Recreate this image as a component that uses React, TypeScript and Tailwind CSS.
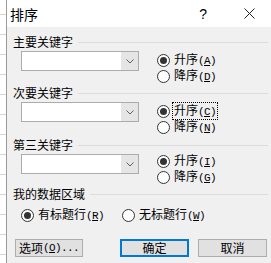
import React from "react";

const gridRows = Array.from({ length: 13 });

function Key({ k }: { k: string }) {
  return (
    <span className="font-['Liberation_Mono',monospace] text-[11px] tracking-[-0.6px]">
      (<u>{k}</u>)
    </span>
  );
}

function Radio({
  checked,
  label,
  k,
  focus,
}: {
  checked?: boolean;
  label: string;
  k: string;
  focus?: boolean;
}) {
  return (
    <div className="flex items-center h-[16px]">
      <span className="w-[13px] h-[13px] rounded-full border border-[#333333] bg-white flex items-center justify-center shrink-0">
        {checked && <span className="w-[7px] h-[7px] rounded-full bg-[#333333]" />}
      </span>
      <span
        className={`ml-[2px] px-[1px] leading-[14px] border ${
          focus ? "border-dotted border-black" : "border-transparent"
        }`}
      >
        {label}
        <Key k={k} />
      </span>
    </div>
  );
}

function Combo() {
  return (
    <div className="w-[118px] h-[20px] border border-[#acacac] bg-white flex justify-end shrink-0">
      <div className="w-[17px] h-full bg-[#e5e5e5] flex items-center justify-center">
        <svg width="8" height="5" viewBox="0 0 8 5">
          <path d="M0.5 0.5 L4 4 L7.5 0.5" stroke="#606060" fill="none" />
        </svg>
      </div>
    </div>
  );
}

function GroupLabel({ text }: { text: string }) {
  return (
    <div className="flex items-center h-[16px]">
      <span className="leading-[16px]">{text}</span>
      <div className="flex-1 h-px bg-[#dcdcdc] ml-[5px]" />
    </div>
  );
}

function KeySection({
  title,
  up,
  down,
  focus,
  contentH,
  radioTop,
}: {
  title: string;
  up: string;
  down: string;
  focus?: boolean;
  contentH: string;
  radioTop: string;
}) {
  return (
    <div>
      <GroupLabel text={title} />
      <div className={`flex items-start pl-[8px] ${contentH}`}>
        <div className="mt-[1px]">
          <Combo />
        </div>
        <div className={`ml-[18px] ${radioTop}`}>
          <Radio checked label="升序" k={up} focus={focus} />
          <Radio label="降序" k={down} />
        </div>
      </div>
    </div>
  );
}

export default function App() {
  return (
    <div className="flex w-[271px] h-[263px] overflow-hidden font-['Noto_Sans_CJK_SC',sans-serif] text-[12px] text-black">
      {/* sheet behind the dialog */}
      <div className="w-[6px] shrink-0 bg-white flex flex-col">
        <div className="h-[15px] border-b border-[#d4d4d4] shrink-0" />
        {gridRows.map((_, i) => (
          <div key={i} className="h-[20px] border-b border-[#d4d4d4] shrink-0" />
        ))}
      </div>

      <div className="flex-1 flex flex-col border-l border-[#9a9a9a] min-w-0">
        {/* title bar */}
        <div className="h-[27px] bg-white flex items-center pl-[3px] shrink-0">
          <span className="text-[14px] leading-[16px]">排序</span>
          <div className="flex-1" />
          <span className="font-['Liberation_Sans',sans-serif] text-[14px] leading-[16px]">?</span>
          <div className="w-[37px]" />
          <svg width="11" height="11" viewBox="0 0 11 11" className="mr-[16px]">
            <path d="M0.5 0.5 L10.5 10.5 M10.5 0.5 L0.5 10.5" stroke="#222" strokeWidth="1" />
          </svg>
        </div>

        {/* body */}
        <div className="flex-1 bg-[#f0f0f0] pt-[7px] pl-[6px] pr-[3px]">
          <KeySection title="主要关键字" up="A" down="D" contentH="h-[35px]" radioTop="mt-[2px]" />
          <KeySection title="次要关键字" up="C" down="N" focus contentH="h-[36px]" radioTop="mt-[2px]" />
          <KeySection title="第三关键字" up="I" down="G" contentH="h-[33px]" radioTop="mt-0" />

          <GroupLabel text="我的数据区域" />
          <div className="flex items-center pl-[8px] mt-[5px]">
            <div className="w-[101px]">
              <Radio checked label="有标题行" k="R" />
            </div>
            <Radio label="无标题行" k="W" />
          </div>

          <div className="flex mt-[16px] ml-[2px]">
            <button className="w-[68px] h-[18px] border border-[#adadad] bg-[#e1e1e1] flex items-center justify-center leading-[14px]">
              选项<Key k="O" />
              <span className="font-['Liberation_Mono',monospace] text-[11px] tracking-[-0.6px]">...</span>
            </button>
            <button className="ml-[37px] w-[69px] h-[18px] border-2 border-[#0078d7] bg-[#e1e1e1] flex items-center justify-center leading-[14px]">
              确定
            </button>
            <button className="ml-[9px] w-[69px] h-[18px] border border-[#adadad] bg-[#e1e1e1] flex items-center justify-center leading-[14px]">
              取消
            </button>
          </div>
        </div>
      </div>
    </div>
  );
}
